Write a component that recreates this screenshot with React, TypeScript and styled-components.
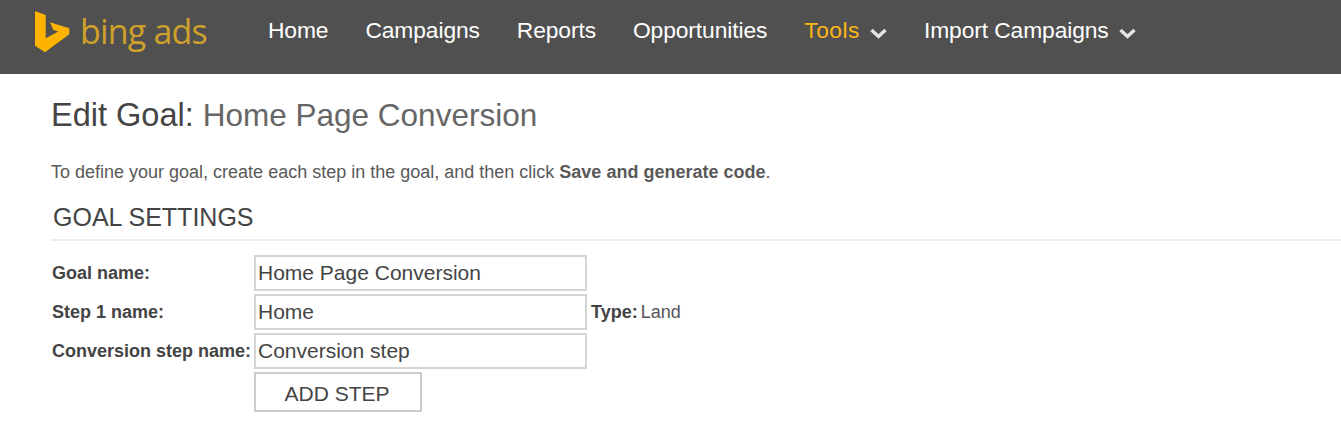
import styled, { createGlobalStyle } from 'styled-components'

const GlobalStyle = createGlobalStyle`
  html, body {
    margin: 0;
    padding: 0;
    background: #fff;
    font-family: "Liberation Sans", Arial, sans-serif;
  }
`

const Header = styled.header`
  display: flex;
  align-items: flex-start;
  height: 74px;
  background: #505050;
`

const Logo = styled.div`
  display: flex;
  align-items: flex-start;
  width: 268px;
  padding: 10px 0 0 35px;
  box-sizing: border-box;
`

const LogoMark = styled.svg`
  width: 36px;
  height: 43px;
  flex: none;
`

const LogoText = styled.span`
  margin: 1px 0 0 9px;
  font-family: "Open Sans", sans-serif;
  font-size: 34px;
  line-height: 40px;
  letter-spacing: -0.8px;
  color: #cfa12b;
`

const Nav = styled.nav`
  display: flex;
  gap: 37px;
  padding-top: 16px;
`

const NavItem = styled.a<{ $active?: boolean }>`
  display: flex;
  align-items: center;
  gap: 10px;
  height: 29px;
  font-size: 22.8px;
  letter-spacing: ${({ $active }) => ($active ? '0.5px' : '-0.1px')};
  color: ${({ $active }) => ($active ? '#fdb515' : '#fff')};
`

const Chevron = styled.svg`
  width: 17px;
  height: 11px;
  margin-top: 5px;
`

const Main = styled.main`
  padding: 23px 0 0 51px;
`

const Title = styled.h1`
  margin: 0;
  font-size: 32.5px;
  line-height: 36px;
  font-weight: 400;
  color: #444;
`

const TitleName = styled.span`
  font-size: 31.5px;
  color: #666;
`

const Intro = styled.p`
  margin: 29px 0 0;
  font-size: 18px;
  line-height: 20px;
  color: #595959;
`

const SectionTitle = styled.h2`
  margin: 21px 0 0;
  padding: 0 0 8px 2px;
  font-size: 25px;
  line-height: 28px;
  font-weight: 400;
  color: #444;
  border-bottom: 2px solid #ededed;
`

const Form = styled.div`
  display: grid;
  grid-template-columns: 203px 333px auto;
  grid-template-rows: 36px 36px 36px auto;
  row-gap: 3px;
  margin-top: 14px;
  align-items: center;
`

const Label = styled.label`
  padding-left: 1px;
  font-size: 18px;
  font-weight: 700;
  color: #444;
  white-space: nowrap;
`

const Input = styled.input`
  box-sizing: border-box;
  width: 333px;
  height: 36px;
  padding: 0 2px;
  border: 2px solid #d4d4d4;
  outline: none;
  font-family: inherit;
  font-size: 21px;
  color: #444;
`

const TypeInfo = styled.div`
  display: flex;
  gap: 3px;
  padding-left: 4px;
  font-size: 18px;
  color: #555;
`

const TypeLabel = styled.b`
  color: #444;
`

const AddButton = styled.button`
  grid-column: 2;
  box-sizing: border-box;
  width: 168px;
  height: 40px;
  padding: 3px 8px 0 6px;
  border: 2px solid #ccc;
  background: #fff;
  font-family: inherit;
  font-size: 21px;
  color: #444;
`

const ChevronIcon = () => (
  <Chevron viewBox="0 0 17 11">
    <path d="M1.5 2 L8.5 8.5 L15.5 2" fill="none" stroke="#e4e4e4" strokeWidth="3.4" />
  </Chevron>
)

export default function App() {
  return (
    <>
      <GlobalStyle />
      <Header>
        <Logo>
          <LogoMark viewBox="0 0 36 43">
            <path
              d="M0 1 L10.7 5 L10.7 28.3 L23.3 21.5 L18.3 20 L15 12.3 L34.3 18.3 L34.3 24.3 L10 42.3 L0 35.7 Z"
              fill="#fdb300"
            />
          </LogoMark>
          <LogoText>bing ads</LogoText>
        </Logo>
        <Nav>
          <NavItem>Home</NavItem>
          <NavItem>Campaigns</NavItem>
          <NavItem>Reports</NavItem>
          <NavItem>Opportunities</NavItem>
          <NavItem $active>
            Tools
            <ChevronIcon />
          </NavItem>
          <NavItem>
            Import Campaigns
            <ChevronIcon />
          </NavItem>
        </Nav>
      </Header>
      <Main>
        <Title>
          Edit Goal: <TitleName>Home Page Conversion</TitleName>
        </Title>
        <Intro>
          To define your goal, create each step in the goal, and then click{' '}
          <b>Save and generate code</b>.
        </Intro>
        <SectionTitle>GOAL SETTINGS</SectionTitle>
        <Form>
          <Label>Goal name:</Label>
          <Input defaultValue="Home Page Conversion" />
          <span />
          <Label>Step 1 name:</Label>
          <Input defaultValue="Home" />
          <TypeInfo>
            <TypeLabel>Type:</TypeLabel> Land
          </TypeInfo>
          <Label>Conversion step name:</Label>
          <Input defaultValue="Conversion step" />
          <span />
          <AddButton>ADD STEP</AddButton>
        </Form>
      </Main>
    </>
  )
}
